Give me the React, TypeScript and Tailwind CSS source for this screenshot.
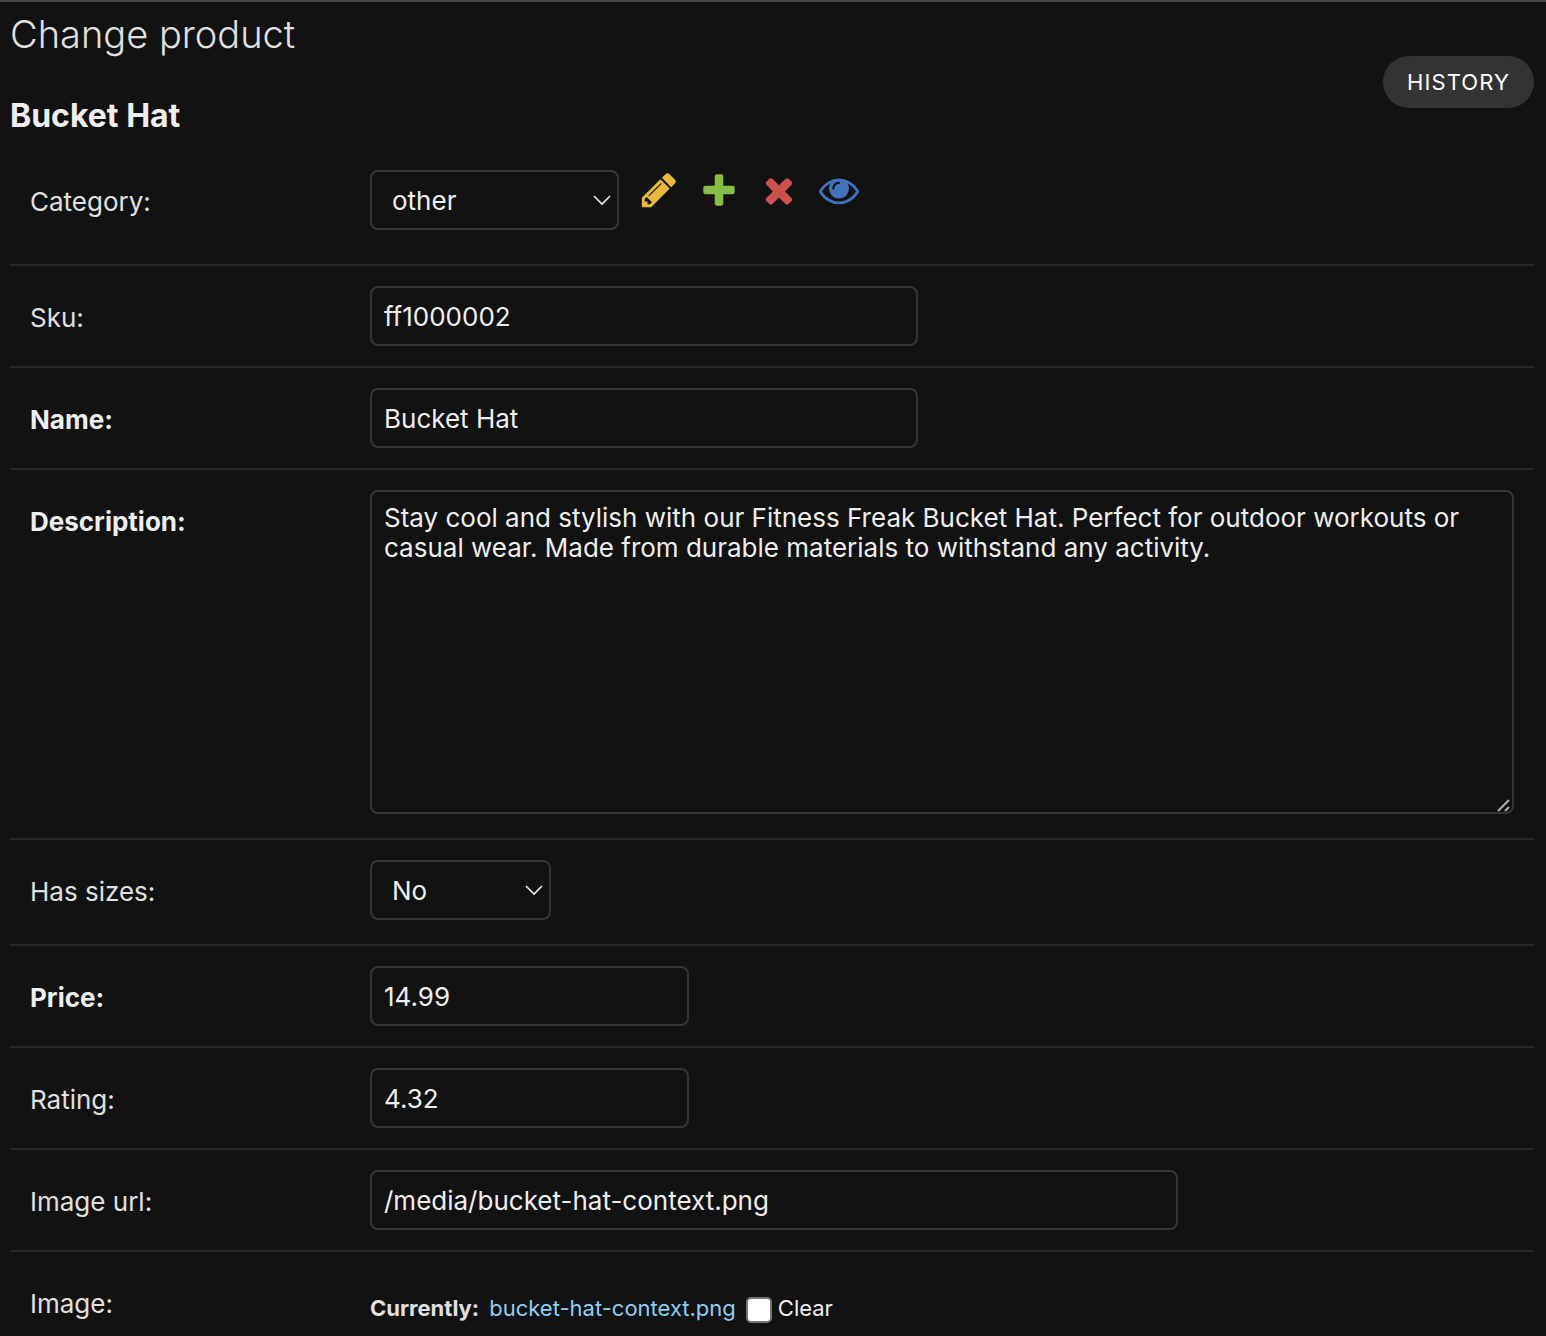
import type { ReactNode } from "react";

const ICONS = {
  change:
    "M491 1536l91-91-235-235-91 91v107h128v128h107zm523-928q0-22-22-22-10 0-17 7l-542 542q-7 7-7 17 0 22 22 22 10 0 17-7l542-542q7-7 7-17zm-54-192l416 416-832 832h-416v-416zm683 96q0 53-37 90l-166 166-416-416 166-165q36-38 90-38 53 0 91 38l235 234q37 39 37 91z",
  add: "M1600 796v192q0 40-28 68t-68 28h-416v416q0 40-28 68t-68 28h-192q-40 0-68-28t-28-68v-416h-416q-40 0-68-28t-28-68v-192q0-40 28-68t68-28h416v-416q0-40 28-68t68-28h192q40 0 68 28t28 68v416h416q40 0 68 28t28 68z",
  remove:
    "M1490 1322q0 40-28 68l-136 136q-28 28-68 28t-68-28l-294-294-294 294q-28 28-68 28t-68-28l-136-136q-28-28-28-68t28-68l294-294-294-294q-28-28-28-68t28-68l136-136q28-28 68-28t68 28l294 294 294-294q28-28 68-28t68 28l136 136q28 28 28 68t-28 68l-294 294 294 294q28 28 28 68z",
  view: "M1664 960q-152-236-381-353 61 104 61 225 0 185-131.5 316.5t-316.5 131.5-316.5-131.5-131.5-316.5q0-121 61-225-229 117-381 353 133 205 333.5 326.5t434.5 121.5 434.5-121.5 333.5-326.5zm-720-384q0-20-14-34t-34-14q-125 0-214.5 89.5t-89.5 214.5q0 20 14 34t34 14 34-14 14-34q0-86 61-147t147-61q20 0 34-14t14-34zm848 384q0 34-20 69-140 230-376.5 368.5t-499.5 138.5-499.5-139-376.5-368q-20-35-20-69t20-69q140-229 376.5-368t499.5-139 499.5 139 376.5 368q20 35 20 69z",
};

function RelatedLink({ label, path, color }: { label: string; path: string; color: string }) {
  return (
    <a href="#" aria-label={label} title={label} className={`block size-10 ${color}`}>
      <svg viewBox="0 0 1792 1792" className="size-10 fill-current" aria-hidden="true">
        <path d={path} />
      </svg>
    </a>
  );
}

function Row({
  id,
  label,
  required = false,
  last = false,
  children,
}: {
  id: string;
  label: string;
  required?: boolean;
  last?: boolean;
  children: ReactNode;
}) {
  return (
    <div className={`flex items-start px-5 pt-5 ${last ? "" : "border-b-2 border-[#272727] pb-5"}`}>
      <label
        htmlFor={id}
        className={`w-[340px] shrink-0 pt-4 leading-8 ${required ? "font-bold text-[#eeeeee]" : "text-[#e0e0e0]"}`}
      >
        {label}
      </label>
      {children}
    </div>
  );
}

const FIELD = "rounded-lg border-2 border-[#353535] bg-[#121212] text-[#eeeeee] outline-none focus:border-[#666666]";

function TextField({ id, value, width }: { id: string; value: string; width: string }) {
  return <input id={id} name={id} type="text" defaultValue={value} className={`${FIELD} h-[60px] px-3 ${width}`} />;
}

function SelectField({ id, value, options, width }: { id: string; value: string; options: string[]; width: string }) {
  return (
    <div className={`relative ${width}`}>
      <select id={id} name={id} defaultValue={value} className={`${FIELD} h-[60px] w-full appearance-none px-5`}>
        {options.map((option) => (
          <option key={option}>{option}</option>
        ))}
      </select>
      <svg
        viewBox="0 0 18 11"
        className="pointer-events-none absolute top-[25px] right-2 h-[11px] w-[18px] text-[#eeeeee]"
        fill="none"
        stroke="currentColor"
        strokeWidth="1.6"
        aria-hidden="true"
      >
        <path d="M1 1l8 8 8-8" />
      </svg>
    </div>
  );
}

export default function App() {
  return (
    <main className="min-h-screen border-t-2 border-[#454545] bg-[#121212] pr-3 pl-[10px] font-['Inter',sans-serif] text-[26px] text-[#eeeeee]">
      <header className="flex items-start justify-between">
        <div>
          <h1 className="pt-2 text-[38px] leading-12 font-light text-[#e0e0e0]">Change product</h1>
          <h2 className="pt-[38px] text-[32px] leading-10 font-bold">Bucket Hat</h2>
        </div>
        <a
          href="#"
          className="mt-[54px] flex h-[52px] items-center rounded-full bg-[#333333] px-6 text-[22px] tracking-wider text-white"
        >
          HISTORY
        </a>
      </header>

      <form className="pt-[14px]">
        <Row id="category" label="Category:">
          <div className="flex gap-5 pb-[14px]">
            <SelectField id="category" value="other" options={["other", "clothing", "equipment"]} width="w-[249px]" />
            <RelatedLink label="Change selected category" path={ICONS.change} color="text-[#e8b83f]" />
            <RelatedLink label="Add another category" path={ICONS.add} color="text-[#86bd45]" />
            <RelatedLink label="Delete selected category" path={ICONS.remove} color="text-[#cc514b]" />
            <RelatedLink label="View selected category" path={ICONS.view} color="text-[#4172bd]" />
          </div>
        </Row>
        <Row id="sku" label="Sku:">
          <TextField id="sku" value="ff1000002" width="w-[548px]" />
        </Row>
        <Row id="name" label="Name:" required>
          <TextField id="name" value="Bucket Hat" width="w-[548px]" />
        </Row>
        <Row id="description" label="Description:" required>
          <div className="relative mb-1 min-w-0 flex-1">
            <textarea
              id="description"
              name="description"
              className={`${FIELD} block h-[324px] w-full resize-y px-3 py-[11px] leading-[30px] [&::-webkit-resizer]:bg-transparent`}
              defaultValue="Stay cool and stylish with our Fitness Freak Bucket Hat. Perfect for outdoor workouts or casual wear. Made from durable materials to withstand any activity."
            />
            <svg
              viewBox="0 0 14 14"
              className="pointer-events-none absolute right-[3px] bottom-[2px] size-[14px] text-[#b0b0b0]"
              fill="none"
              stroke="currentColor"
              strokeWidth="2"
              aria-hidden="true"
            >
              <path d="M1 13L12 2M8 13l4-4" />
            </svg>
          </div>
        </Row>
        <Row id="has_sizes" label="Has sizes:">
          <div className="pb-1">
            <SelectField id="has_sizes" value="No" options={["Unknown", "Yes", "No"]} width="w-[181px]" />
          </div>
        </Row>
        <Row id="price" label="Price:" required>
          <TextField id="price" value="14.99" width="w-[319px]" />
        </Row>
        <Row id="rating" label="Rating:">
          <TextField id="rating" value="4.32" width="w-[319px]" />
        </Row>
        <Row id="image_url" label="Image url:">
          <TextField id="image_url" value="/media/bucket-hat-context.png" width="w-[808px]" />
        </Row>
        <Row id="image-clear" label="Image:" last>
          <div className="flex items-center pt-5 text-[22px] leading-8">
            <span className="font-bold text-[#e0e0e0]">Currently:</span>
            <a href="#" className="ml-[10px] text-[#8fcef5]">
              bucket-hat-context.png
            </a>
            <input
              id="image-clear"
              name="image-clear"
              type="checkbox"
              className="mt-[3px] ml-[10px] size-[26px] appearance-none rounded-[5px] border-2 border-[#767676] bg-white checked:bg-[#4172bd]"
            />
            <label htmlFor="image-clear" className="ml-[6px]">
              Clear
            </label>
          </div>
        </Row>
      </form>
    </main>
  );
}
